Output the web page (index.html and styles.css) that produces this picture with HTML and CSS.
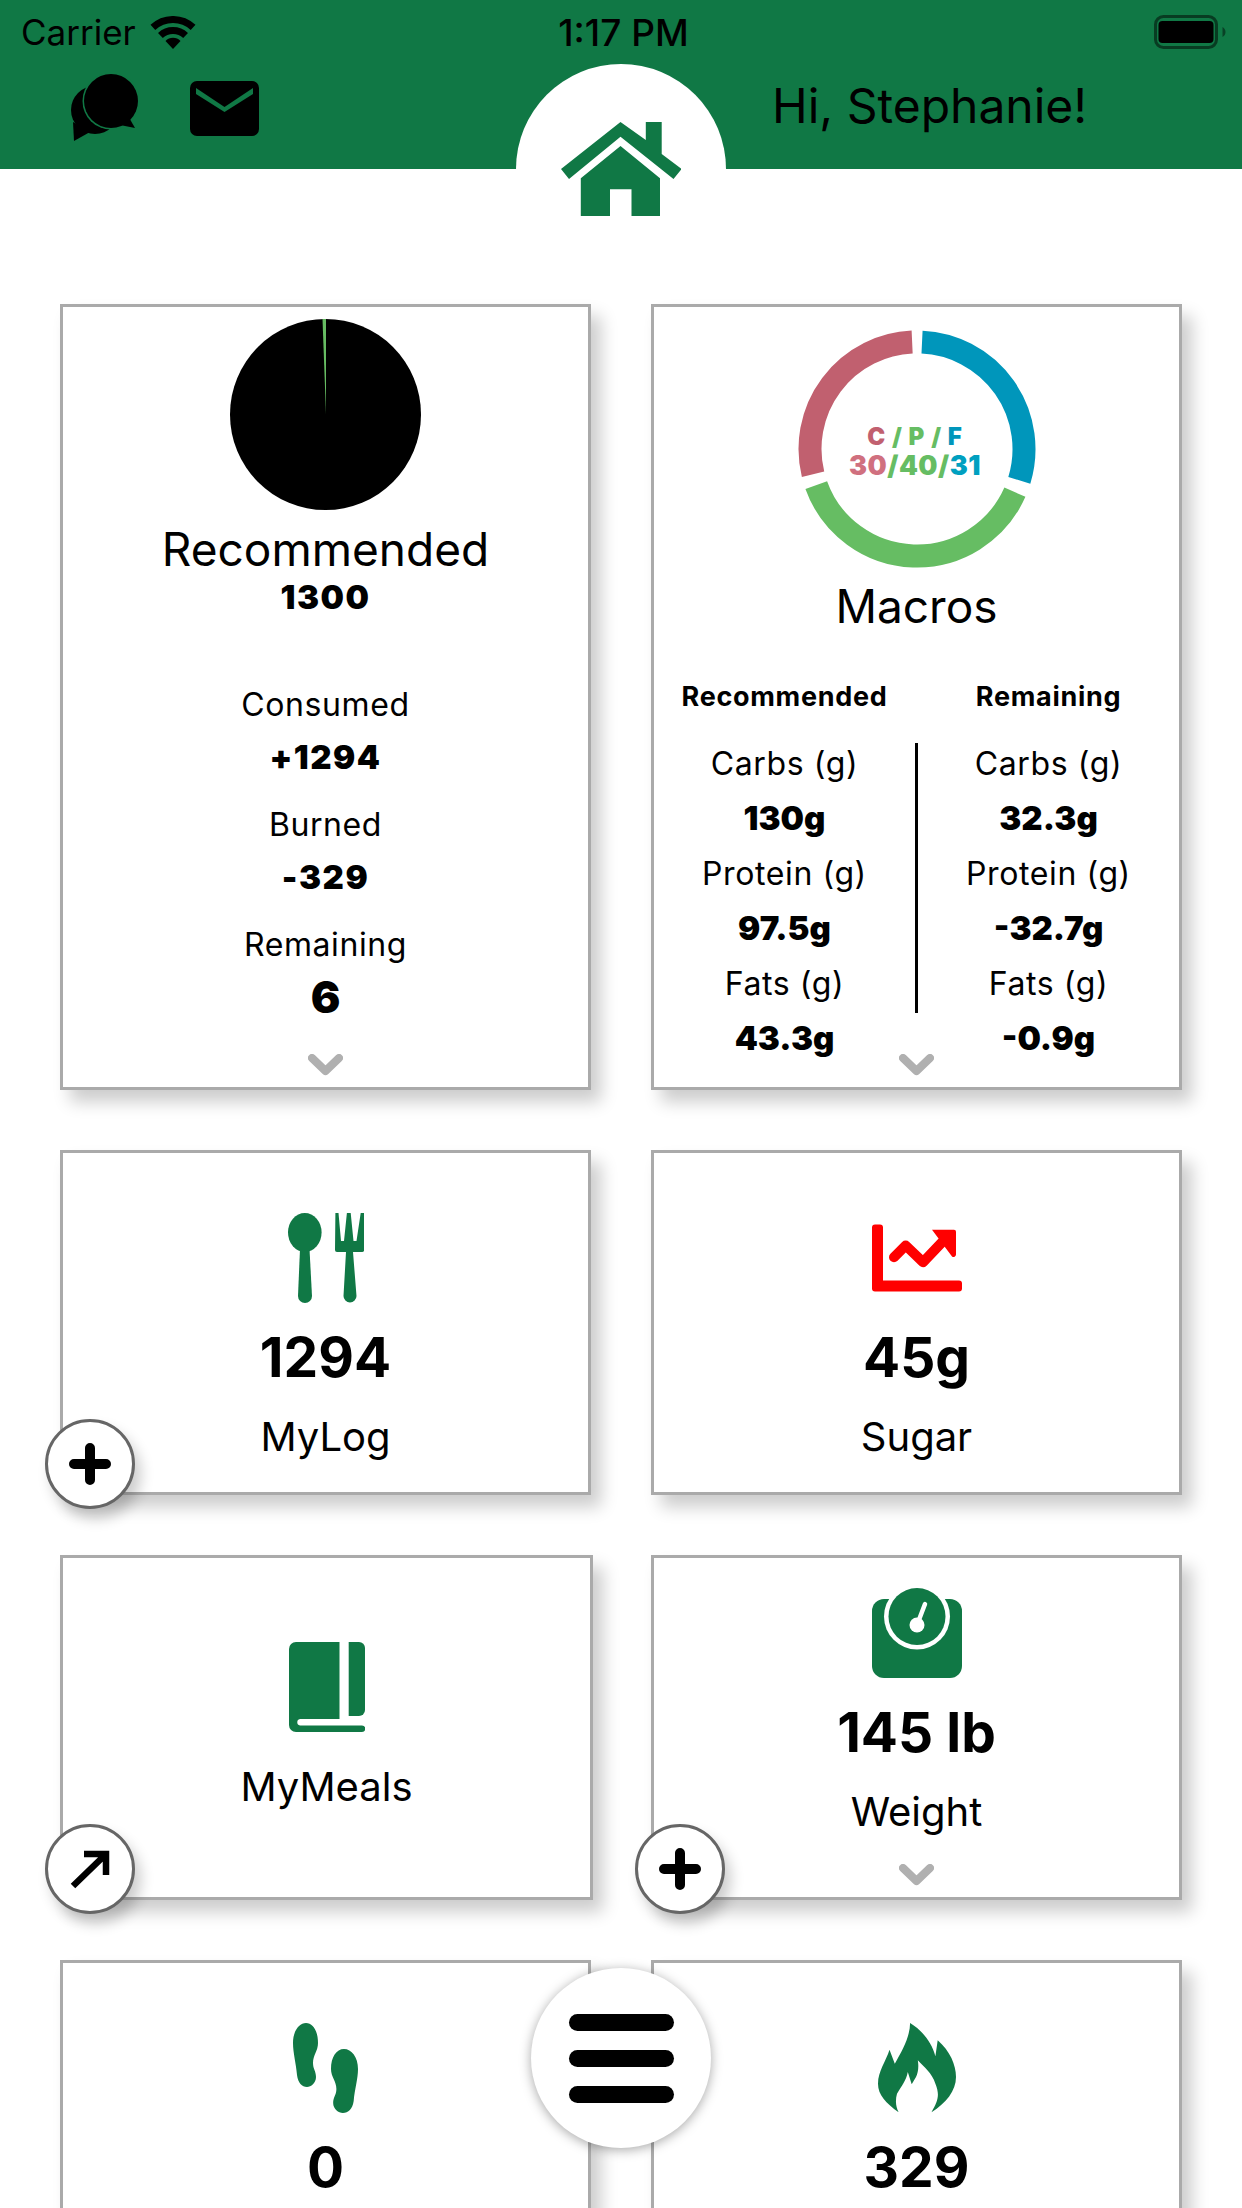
FILE: index.html
```html
<!DOCTYPE html>
<html>
<head>
  <meta charset="utf-8">
  <title>Home</title>
  <meta content="width=device-width, initial-scale=1" name="viewport">
  <link rel="stylesheet" href="styles.css">
</head>
<body>
  <header class="topbar">
    <div class="status-bar">
      <div class="status-left">
        <span class="carrier">Carrier</span>
        <svg class="wifi" viewBox="0 0 46 33">
          <path d="M2.9 11.4A29.5 29.5 0 0 1 43.1 11.4" fill="none" stroke="#000" stroke-width="7"/>
          <path d="M10.4 19.5A18.5 18.5 0 0 1 35.6 19.5" fill="none" stroke="#000" stroke-width="7"/>
          <path d="M23 33L15.5 25A10.5 10.5 0 0 1 30.5 25Z"/>
        </svg>
      </div>
      <span class="clock">1:17 PM</span>
      <svg class="battery" viewBox="0 0 72 34">
        <rect x="1.5" y="1.5" width="61" height="31" rx="8" fill="none" stroke="#000" stroke-opacity="0.5" stroke-width="3"/>
        <rect x="4.5" y="6" width="55" height="22" rx="4"/>
        <path d="M68.5 12c2 1 3 3 3 5s-1 4-3 5z" fill-opacity="0.45"/>
      </svg>
    </div>
    <nav class="nav-row">
      <div class="nav-icons">
        <svg class="icon-chat" viewBox="0 0 69 67">
          <circle cx="25" cy="36" r="24"/>
          <path d="M3 48L4 67L20 58Z"/>
          <circle cx="41" cy="27" r="28.5" fill="#107845"/>
          <circle cx="41" cy="27" r="27"/>
          <path d="M57 40L65 54L50 51Z"/>
        </svg>
        <svg class="icon-mail" viewBox="0 0 69 55">
          <rect width="69" height="55" rx="7"/>
          <path d="M6 7L34.5 26L63 7V13L34.5 31L6 13Z" fill="#107845"/>
        </svg>
      </div>
      <div class="home-tab">
        <svg class="icon-home" viewBox="0 0 120.5 94">
          <path d="M59.5 0L0 47L8 57L59.5 14.7L112.5 57L120.5 47L100.7 32V0H84.8V18Z"/>
          <path d="M59.5 24L19.8 56.3V94H49V67.3H70.5V94H99V56.3Z"/>
        </svg>
      </div>
      <p class="greeting">Hi, Stephanie!</p>
    </nav>
  </header>

  <main class="dashboard">
    <!-- Calories -->
    <section class="card card-tall">
      <svg class="pie" viewBox="0 0 191 191">
        <circle cx="95.5" cy="95.5" r="95.5"/>
        <path d="M92.5 0H96V95.5Z" fill="#66bb62"/>
      </svg>
      <h2 class="card-title">Recommended</h2>
      <div class="strong-num calorie-num">1300</div>
      <div class="calorie-stat calorie-stat-first">
        <div class="stat-label">Consumed</div>
        <div class="strong-num calorie-num">+1294</div>
      </div>
      <div class="calorie-stat">
        <div class="stat-label">Burned</div>
        <div class="strong-num calorie-num">-329</div>
      </div>
      <div class="calorie-stat">
        <div class="stat-label">Remaining</div>
        <div class="strong-num strong-num-big">6</div>
      </div>
      <svg class="more" viewBox="0 0 35 22"><path d="M4 4L17.5 17L31 4"/></svg>
    </section>

    <!-- Macros -->
    <section class="card card-tall">
      <div class="donut">
        <svg viewBox="0 0 240 240" fill="none" stroke-width="23">
          <path d="M125.04 13.12A107 107 0 0 1 222.32 151.29" stroke="#0096bb"/>
          <path d="M217.9 163.2A107 107 0 0 1 19.26 156.07" stroke="#66bd63"/>
          <path d="M16.05 145.34A107 107 0 0 1 115.14 13.11" stroke="#c1606f"/>
        </svg>
        <div class="donut-label">
          <div class="donut-keys"><span class="pink">C</span> <span class="green">/ P /</span> <span class="blue">F</span></div>
          <div class="donut-nums"><span class="pink-light">30</span><span class="green">/40/</span><span class="blue-light">31</span></div>
        </div>
      </div>
      <h2 class="card-title macros-title">Macros</h2>
      <div class="macro-table">
        <div class="macro-col">
          <h3 class="macro-head">Recommended</h3>
          <div class="macro-cell">Carbs (g)</div>
          <div class="macro-cell strong-num">130g</div>
          <div class="macro-cell">Protein (g)</div>
          <div class="macro-cell strong-num">97.5g</div>
          <div class="macro-cell">Fats (g)</div>
          <div class="macro-cell strong-num">43.3g</div>
        </div>
        <div class="macro-divider"></div>
        <div class="macro-col">
          <h3 class="macro-head">Remaining</h3>
          <div class="macro-cell">Carbs (g)</div>
          <div class="macro-cell strong-num">32.3g</div>
          <div class="macro-cell">Protein (g)</div>
          <div class="macro-cell strong-num">-32.7g</div>
          <div class="macro-cell">Fats (g)</div>
          <div class="macro-cell strong-num">-0.9g</div>
        </div>
      </div>
      <svg class="more" viewBox="0 0 35 22"><path d="M4 4L17.5 17L31 4"/></svg>
    </section>

    <!-- MyLog -->
    <section class="card tile">
      <svg class="tile-icon" viewBox="0 0 76 90">
        <ellipse cx="16.8" cy="19.5" rx="16.8" ry="19.5"/>
        <path d="M12 36H21.5L24 83a7 7 0 0 1-14 0Z"/>
        <path d="M47.4 0H50.5L53 28H56L58.9 0H62.7L65.5 28H68.5L72.7 0H76.1V37q0 2-2 2H65L68.5 83a6.5 6.5 0 0 1-13 0L58 39H49q-2 0-2-2Z"/>
      </svg>
      <div class="tile-value">1294</div>
      <div class="tile-label">MyLog</div>
      <button class="round-btn">
        <svg viewBox="0 0 42 42"><path d="M21 5V37M5 21H37"/></svg>
      </button>
    </section>

    <!-- Sugar -->
    <section class="card tile">
      <svg class="tile-icon icon-red" viewBox="0 -11.5 90 90">
        <path d="M3 0H8a3 3 0 0 1 3 3V56H87a3 3 0 0 1 3 3V64a3 3 0 0 1-3 3H3a3 3 0 0 1-3-3V3a3 3 0 0 1 3-3Z"/>
        <path class="chart-line" d="M22 32.7L33.7 21L51 37.7L70 17.7"/>
        <path d="M60 5.3H82a2 2 0 0 1 2 2V30a2.5 2.5 0 0 1-4 2Z"/>
      </svg>
      <div class="tile-value">45g</div>
      <div class="tile-label">Sugar</div>
    </section>

    <!-- MyMeals -->
    <section class="card tile tile-meals">
      <svg class="tile-icon" viewBox="0 0 76 90">
        <path d="M7 0H50.5V77H11a3.3 3.3 0 0 0 0 6.5H73a3.2 3.2 0 0 1 0 6.5H7a7 7 0 0 1-7-7V7a7 7 0 0 1 7-7Z"/>
        <path d="M59.7 0H70a6 6 0 0 1 6 6V68a6 6 0 0 1-6 6H59.7Z"/>
      </svg>
      <div class="tile-label">MyMeals</div>
      <button class="round-btn">
        <svg viewBox="0 0 42 42"><path class="arrow-line" d="M4 38L36 7M15 6H37V27"/></svg>
      </button>
    </section>

    <!-- Weight -->
    <section class="card tile tile-weight">
      <svg class="tile-icon" viewBox="0 0 90 90">
        <rect y="11" width="90" height="79" rx="12"/>
        <circle cx="45" cy="28.5" r="33" fill="#fff"/>
        <circle cx="45" cy="28.5" r="28.5"/>
        <circle class="scale-hub" cx="45" cy="37" r="7.5"/>
        <path class="scale-needle" d="M45 37L53 16"/>
      </svg>
      <div class="tile-value">145 lb</div>
      <div class="tile-label">Weight</div>
      <svg class="more" viewBox="0 0 35 22"><path d="M4 4L17.5 17L31 4"/></svg>
      <button class="round-btn">
        <svg viewBox="0 0 42 42"><path d="M21 5V37M5 21H37"/></svg>
      </button>
    </section>

    <!-- Steps -->
    <section class="card tile">
      <svg class="tile-icon" viewBox="0 0 65 90">
        <path id="foot" d="M13 0C20 0 25 8 25 20C25 28 20 32 20 40C20 46 23 48 23 54C23 60 18 64 14 64C9 64 5 60 4 52C3 40 0 30 0 20C0 8 6 0 13 0Z"/>
        <use href="#foot" transform="translate(65 26) scale(-1.08 1)"/>
      </svg>
      <div class="tile-value">0</div>
    </section>

    <!-- Calories burned -->
    <section class="card tile">
      <svg class="tile-icon" viewBox="0 0 78 90">
        <path d="M20.6 89.3C8 80 0 72 0 60.7C0 48 8 38 11.5 26.7L16.8 40.7C24 28 32 14 32.1 0C45 8 54 20 57.4 33.3L59.7 17.3C72 28 78 42 78 54C78 68 68 80 53.5 89.3C60 78 62 72 57.4 60.7C54 50 46 44 39.8 37.3C41 44 40 50 38 54L33.7 61.3L29.8 49C28 58 24 62 19 70.7C17 78 18 84 20.6 89.3Z"/>
      </svg>
      <div class="tile-value">329</div>
    </section>
  </main>

  <button class="menu-fab">
    <span class="menu-bar"></span>
    <span class="menu-bar"></span>
    <span class="menu-bar"></span>
  </button>
</body>
</html>
```
FILE: styles.css
```css
html, body {
  height: 2208px;
  margin: 0;
  overflow: hidden;
}
body {
  background: #fff;
  color: #000;
  font-family: Inter, "Liberation Sans", sans-serif;
}
h2, h3, p {
  margin: 0;
  font-weight: 400;
}
button {
  padding: 0;
  background: #fff;
  color: #000;
  font: inherit;
}

/* Green header */
.topbar {
  height: 169px;
  background: #107845;
}
.status-bar {
  display: grid;
  grid-template-columns: 1fr auto 1fr;
  align-items: center;
  height: 64px;
  padding: 0 16px 0 21px;
}
.status-left {
  display: flex;
  align-items: center;
  gap: 14px;
}
.carrier {
  font-size: 35px;
}
.wifi {
  width: 46px;
  height: 33px;
}
.clock {
  font-size: 37px;
  font-weight: 500;
}
.battery {
  justify-self: end;
  width: 72px;
  height: 34px;
}
.nav-row {
  display: grid;
  grid-template-columns: 516px 210px 1fr;
  height: 105px;
}
.nav-icons {
  display: flex;
  align-items: flex-start;
  gap: 51px;
  padding: 10px 0 0 70px;
}
.icon-chat {
  width: 69px;
  height: 67px;
}
.icon-mail {
  width: 69px;
  height: 55px;
  margin-top: 7px;
}
.home-tab {
  display: flex;
  justify-content: center;
  padding-top: 58px;
  background: #fff;
  border-radius: 105px 105px 0 0;
}
.icon-home {
  flex: none;
  width: 120.5px;
  height: 94px;
  fill: #107845;
}
.greeting {
  padding: 12px 0 0 46px;
  font-size: 48px;
  line-height: 60px;
}

/* Cards */
.dashboard {
  display: grid;
  grid-template-columns: 531px 531px;
  grid-template-rows: 786px;
  grid-auto-rows: 345px;
  gap: 60px;
  padding: 135px 0 0 60px;
}
.card {
  position: relative;
  display: flex;
  flex-direction: column;
  align-items: center;
  box-sizing: border-box;
  background: #fff;
  border: 3px solid #aaa;
  box-shadow: 10px 12px 16px rgba(0, 0, 0, 0.2);
}
.card-title {
  margin-top: 11px;
  font-size: 46px;
  line-height: 56px;
}
.strong-num {
  font-size: 33px;
  font-weight: 900;
  line-height: 40px;
}
.calorie-num {
  letter-spacing: 1.5px;
}
.strong-num-big {
  margin-top: 7px;
  font-size: 44px;
  line-height: 50px;
}
.more {
  position: absolute;
  bottom: 11px;
  left: 50%;
  width: 35px;
  height: 22px;
  margin-left: -18px;
  fill: none;
  stroke: #b0b0b0;
  stroke-width: 8;
  stroke-linecap: round;
  stroke-linejoin: round;
}

/* Calories card */
.pie {
  width: 191px;
  height: 191px;
  margin-top: 12px;
}
.calorie-stat {
  margin-top: 28px;
  text-align: center;
}
.calorie-stat-first {
  margin-top: 68px;
}
.stat-label {
  margin-bottom: 12px;
  font-size: 32px;
  line-height: 40px;
  letter-spacing: 0.6px;
}
.calorie-stat:last-of-type .stat-label {
  margin-bottom: 0;
}

/* Macros card */
.donut {
  position: relative;
  width: 240px;
  height: 240px;
  margin-top: 22px;
}
.donut svg {
  display: block;
}
.donut-label {
  position: absolute;
  inset: 0;
  display: flex;
  flex-direction: column;
  align-items: center;
  justify-content: center;
  padding: 6px 3px 0 0;
  font-weight: 900;
  text-align: center;
}
.donut-keys {
  font-size: 24px;
  line-height: 28px;
  letter-spacing: 1px;
}
.donut-nums {
  font-size: 27px;
  line-height: 30px;
  letter-spacing: 0.5px;
}
.pink { color: #c1606f; }
.pink-light { color: #d0707f; }
.green { color: #66bd63; }
.blue { color: #0096bb; }
.blue-light { color: #00a0c0; }
.macros-title {
  margin-top: 9px;
}
.macro-table {
  display: flex;
  align-self: stretch;
  margin-top: 43px;
}
.macro-col {
  flex: 1;
  text-align: center;
}
.macro-head {
  margin-bottom: 19px;
  font-size: 27px;
  font-weight: 700;
  line-height: 40px;
  letter-spacing: 0.7px;
}
.macro-cell {
  font-size: 32px;
  line-height: 55px;
  letter-spacing: 0.6px;
}
.macro-cell.strong-num {
  font-size: 33px;
  line-height: 55px;
  letter-spacing: 0;
}
.macro-divider {
  flex: none;
  width: 3px;
  height: 270px;
  margin-top: 66px;
  background: #000;
}

/* Small tiles */
.tile {
  padding-top: 60px;
}
.tile-icon {
  flex: none;
  height: 90px;
  fill: #107845;
}
.icon-red {
  fill: #f00;
}
.chart-line {
  fill: none;
  stroke: #f00;
  stroke-width: 10;
  stroke-linecap: round;
  stroke-linejoin: round;
}
.scale-hub {
  fill: #fff;
}
.scale-needle {
  stroke: #fff;
  stroke-width: 4.5;
  stroke-linecap: round;
}
.tile-value {
  margin-top: 22px;
  font-size: 55px;
  font-weight: 700;
  line-height: 64px;
}
.tile-label {
  margin-top: 23px;
  font-size: 40px;
  line-height: 50px;
}
.tile-meals {
  width: 533px;
  padding-top: 84px;
}
.tile-meals .tile-label {
  margin-top: 30px;
}
.tile-weight {
  padding-top: 30px;
}
.tile-weight .round-btn {
  left: -19px;
}
.round-btn {
  position: absolute;
  left: -18px;
  bottom: -17px;
  display: flex;
  align-items: center;
  justify-content: center;
  box-sizing: border-box;
  width: 90px;
  height: 90px;
  border: 3px solid #666;
  border-radius: 50%;
  box-shadow: 6px 10px 14px rgba(0, 0, 0, 0.2);
}
.round-btn svg {
  width: 42px;
  height: 42px;
  fill: none;
  stroke: #000;
  stroke-width: 10;
  stroke-linecap: round;
}
.round-btn .arrow-line {
  stroke-width: 6.5;
  stroke-linecap: butt;
}

/* Floating menu */
.menu-fab {
  position: fixed;
  left: 531px;
  bottom: 60px;
  display: flex;
  flex-direction: column;
  align-items: center;
  justify-content: center;
  gap: 19px;
  width: 180px;
  height: 180px;
  border: none;
  border-radius: 50%;
  box-shadow: 0 2px 12px rgba(0, 0, 0, 0.35);
}
.menu-bar {
  width: 105px;
  height: 17px;
  background: #000;
  border-radius: 9px;
}
```
